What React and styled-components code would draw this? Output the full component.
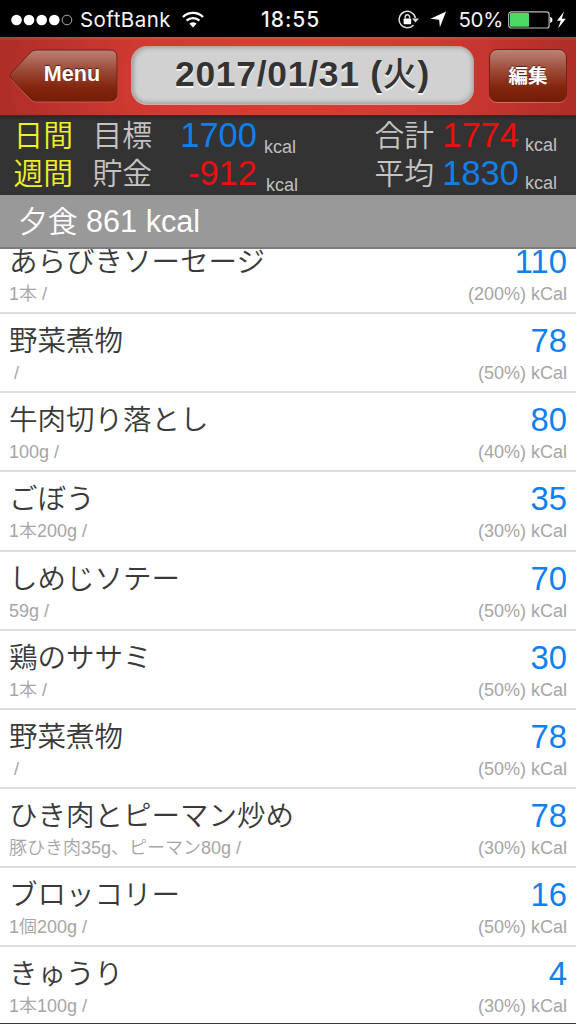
import React from "react";
import styled, { createGlobalStyle } from "styled-components";

const sans = `"Liberation Sans", "Noto Sans CJK JP", sans-serif`;
const cjk = `"Noto Sans CJK JP", sans-serif`;

const Global = createGlobalStyle`
  * { box-sizing: border-box; }
  body { margin: 0; background: #fff; }
`;

const Screen = styled.div`
  width: 576px;
  height: 1024px;
  overflow: hidden;
  display: flex;
  flex-direction: column;
  background: #fff;
  border-bottom: 1px solid #3a3838;
  font-family: ${sans};
  white-space: pre;
`;

const StatusBar = styled.header`
  flex: none;
  height: 37px;
  display: grid;
  grid-template-columns: 250px 1fr 168px;
  align-items: center;
  padding: 2px 10px 0 11px;
  background: #000;
  color: #f4f4f4;
  font-family: Inter, sans-serif;
  font-size: 20.5px;
`;

const StatusGroup = styled.div`
  display: flex;
  align-items: center;
  justify-content: ${(p) => (p.$end ? "flex-end" : "flex-start")};
`;

const Carrier = styled.span`
  margin: 0 11px 0 7px;
  letter-spacing: 0.45px;
`;

const Clock = styled.span`
  font-weight: 550;
  font-size: 21px;
  letter-spacing: 1px;
`;

const Percent = styled.span`
  margin: 0 5px 0 11px;
  letter-spacing: -0.3px;
`;

const NavBar = styled.nav`
  flex: none;
  height: 79px;
  display: flex;
  align-items: flex-start;
  padding: 9px 9px 0;
  background:
    linear-gradient(rgba(255, 110, 90, 0.25), transparent 4px),
    radial-gradient(ellipse 330px 260px at 50% 60%, #d93d33, #d13a31 45%, #a52a25);
  border-bottom: 1px solid #5c1f1c;
`;

const MenuButton = styled.button`
  position: relative;
  width: 109px;
  height: 56px;
  margin: 3px 0 0;
  padding: 0 0 7px 17px;
  border: 0;
  background: none;
  color: #fff;
  font: bold 21.6px/49px ${sans};
  text-shadow: 0 -1px 1px rgba(0, 0, 0, 0.6);
`;

const MenuShape = styled.svg`
  position: absolute;
  inset: 0;
`;

const MenuLabel = styled.span`
  position: relative;
`;

const DateBox = styled.div`
  width: 343px;
  height: 59px;
  margin-left: 13px;
  border-radius: 16px;
  background: #d1d1d1;
  border: 1px solid #b9a5a2;
  border-bottom-color: #d8aaa5;
  box-shadow: inset 2px 1px 4px rgba(90, 90, 90, 0.35), inset -1px -2px 4px rgba(90, 90, 90, 0.3);
  color: #333;
  font-size: 35.4px;
  font-weight: bold;
  letter-spacing: 0.75px;
  line-height: 55px;
  text-align: center;
  text-shadow: 0 1.5px 0 #f3f3f3;
`;

const DateDay = styled.span`
  display: inline-block;
  font-family: ${cjk};
  font-weight: 500;
  font-size: 34px;
  line-height: 30px;
`;

const EditButton = styled.button`
  width: 78px;
  height: 53px;
  margin: 3px 0 0 15px;
  padding: 0 0 2px;
  border: 1px solid #6b221a;
  border-radius: 8px;
  background: linear-gradient(#bd8175, #9c4a38 40%, #83270f 72%, #751d04);
  box-shadow: 0 1px 0 rgba(255, 150, 130, 0.5);
  color: #fff;
  font: bold 19.5px/48px ${cjk};
  text-shadow: 0 -1px 1px rgba(0, 0, 0, 0.5);
`;

const Summary = styled.section`
  flex: none;
  height: 79px;
  padding: 0 0 0 14px;
  background: linear-gradient(#292727, #333 4px);
`;

const SummaryRow = styled.div`
  height: 38px;
  display: grid;
  grid-template-columns: 79px 73px 91px 118px 60px 84px 1fr;
  align-items: baseline;
  line-height: 38px;
`;

const Label = styled.span`
  position: relative;
  top: -2px;
  left: -0.5px;
  color: ${(p) => p.$color || "#c4c4c4"};
  font-family: ${cjk};
  font-weight: 350;
  font-size: 29.8px;
`;

const Total = styled.span`
  position: relative;
  top: -1px;
  color: ${(p) => (p.$over ? "#ef0d0d" : "#0f80ee")};
  font-size: 34.5px;
  text-align: right;
`;

const Unit = styled.span`
  position: relative;
  top: ${(p) => p.$drop}px;
  padding-left: ${(p) => p.$indent}px;
  color: #c0c0c0;
  font-size: 18px;
`;

const MealHeader = styled.h2`
  flex: none;
  height: 54px;
  margin: 0;
  padding-left: 18px;
  background: #999;
  border-bottom: 2px solid #7d7d7d;
  color: #fff;
  font-size: 30.6px;
  font-weight: 350;
  line-height: 53px;
`;

const MealName = styled.span`
  display: inline-block;
  font-family: ${cjk};
  font-size: 29.8px;
  line-height: 30px;
`;

const FoodList = styled.ul`
  flex: 1;
  min-height: 0;
  overflow: hidden;
  display: flex;
  flex-direction: column;
  margin: 0;
  padding: 0;
  list-style: none;
`;

const FoodRow = styled.li`
  flex: none;
  height: 79.17px;
  padding: 8px 9px 0;
  border-bottom: 2px solid #dcdcdc;

  &:first-child {
    margin-top: -14px;
  }
`;

const Line = styled.div`
  display: flex;
  justify-content: space-between;
  height: ${(p) => p.$height}px;
  line-height: ${(p) => p.$height}px;
`;

const FoodName = styled.span`
  color: #3a3a3a;
  font-family: ${cjk};
  font-weight: 350;
  font-size: 28.5px;
  line-height: 33px;
`;

const Calories = styled.span`
  color: #0f80ee;
  font-size: 32.8px;
`;

const Detail = styled.span`
  color: #a6a6a6;
  font-weight: 350;
  font-size: 18px;
  line-height: 26px;
`;

const foods = [
  ["あらびきソーセージ", "110", "1本 /", "200"],
  ["野菜煮物", "78", " /", "50"],
  ["牛肉切り落とし", "80", "100g /", "40"],
  ["ごぼう", "35", "1本200g /", "30"],
  ["しめじソテー", "70", "59g /", "50"],
  ["鶏のササミ", "30", "1本 /", "50"],
  ["野菜煮物", "78", " /", "50"],
  ["ひき肉とピーマン炒め", "78", "豚ひき肉35g、ピーマン80g /", "30"],
  ["ブロッコリー", "16", "1個200g /", "50"],
  ["きゅうり", "4", "1本100g /", "30"],
];

const Signal = () => (
  <svg width="62" height="12" viewBox="0 0 62 12">
    {[5.5, 18, 30.7, 43.3].map((x) => (
      <circle key={x} cx={x} cy="6" r="5.3" fill="#fff" />
    ))}
    <circle cx="56" cy="6" r="4.8" fill="none" stroke="#aaa" strokeWidth="1" />
  </svg>
);

const Wifi = () => (
  <svg width="22" height="17" viewBox="0 0 22 17" fill="none" stroke="#fff" strokeWidth="2.4">
    <path d="M1 6a14.2 14.2 0 0 1 20 0" />
    <path d="M4.6 9.7a9.2 9.2 0 0 1 12.8 0" />
    <path d="M11 16.4 7.4 12.7a5.2 5.2 0 0 1 7.2 0z" fill="#fff" stroke="none" />
  </svg>
);

const RotationLock = () => (
  <svg width="21" height="19" viewBox="0 0 21 19" fill="none" stroke="#ddd">
    <path d="M17.4 8A8.2 8.2 0 1 0 15.5 15" strokeWidth="1.5" />
    <path d="M14 8.400h7l-3.500 4.200z" fill="#ddd" stroke="none" />
    <rect x="5.6" y="8.4" width="7.6" height="5.8" rx="0.8" fill="#fff" stroke="none" />
    <path d="M7.2 8.6V7a2.2 2.2 0 0 1 4.4 0v1.6" strokeWidth="1.4" />
  </svg>
);

const LocationArrow = () => (
  <svg width="17" height="17" viewBox="0 0 16 17">
    <path d="M15.6.6 9.4 16.2 8.6 8.7 0 7.8z" fill="#fff" />
  </svg>
);

const Battery = () => (
  <svg width="58" height="18" viewBox="0 0 58 18">
    <rect x=".7" y=".8" width="40.4" height="16.2" rx="2.6" fill="none" stroke="#bbb" strokeWidth="1.2" />
    <rect x="2" y="2" width="19" height="13.8" rx="1" fill="#4cd964" />
    <path d="M42.2 6c1.3.2 2.2 1.4 2.2 2.9S43.5 11.6 42.2 11.8z" fill="#fff" />
    <path d="M56 .6 49 9.8h3.800L50 17.4l7.800-9.600h-4z" fill="#fff" />
  </svg>
);

const Spacer = styled.span`
  width: 11px;
`;

export default function App() {
  return (
    <Screen>
      <Global />
      <StatusBar>
        <StatusGroup>
          <Signal />
          <Carrier>SoftBank</Carrier>
          <Wifi />
        </StatusGroup>
        <Clock>18:55</Clock>
        <StatusGroup $end>
          <RotationLock />
          <Spacer />
          <LocationArrow />
          <Percent>50%</Percent>
          <Battery />
        </StatusGroup>
      </StatusBar>

      <NavBar>
        <MenuButton>
          <MenuShape width="109" height="56" viewBox="0 0 109 56">
            <defs>
              <linearGradient id="menuFill" x1="0" y1="0" x2="0" y2="1">
                <stop offset="0" stopColor="#bd8175" />
                <stop offset="0.4" stopColor="#9c4a38" />
                <stop offset="0.72" stopColor="#83270f" />
                <stop offset="1" stopColor="#751d04" />
              </linearGradient>
            </defs>
            <path
              d="M27 2H101q7 0 7 7V46q0 7-7 7H27q-4 0-7-4L3 31q-3-3 0-6L20 6q3-4 7-4z"
              fill="none"
              stroke="#e07a6c"
              strokeOpacity="0.6"
            />
            <path
              d="M27 1H101q7 0 7 7V45q0 7-7 7H27q-4 0-7-4L2 29q-2-2.5 0-5L20 5q3-4 7-4z"
              fill="url(#menuFill)"
              stroke="#6b221a"
            />
          </MenuShape>
          <MenuLabel>Menu</MenuLabel>
        </MenuButton>
        <DateBox>
          2017/01/31 (<DateDay>火</DateDay>)
        </DateBox>
        <EditButton>編集</EditButton>
      </NavBar>

      <Summary>
        <SummaryRow>
          <Label $color="#f0f024">日間</Label>
          <Label>目標</Label>
          <Total>1700</Total>
          <Unit $indent={7} $drop={5}>kcal</Unit>
          <Label>合計</Label>
          <Total $over>1774</Total>
          <Unit $indent={6} $drop={3}>kcal</Unit>
        </SummaryRow>
        <SummaryRow>
          <Label $color="#f0f024">週間</Label>
          <Label>貯金</Label>
          <Total $over>-912</Total>
          <Unit $indent={9} $drop={5}>kcal</Unit>
          <Label>平均</Label>
          <Total>1830</Total>
          <Unit $indent={6} $drop={3}>kcal</Unit>
        </SummaryRow>
      </Summary>

      <MealHeader>
        <MealName>夕食</MealName> 861 kcal
      </MealHeader>

      <FoodList>
        {foods.map(([name, kcal, amount, percent], i) => (
          <FoodRow key={i}>
            <Line $height={38}>
              <FoodName>{name}</FoodName>
              <Calories>{kcal}</Calories>
            </Line>
            <Line $height={24}>
              <Detail>{amount}</Detail>
              <Detail>({percent}%) kCal</Detail>
            </Line>
          </FoodRow>
        ))}
      </FoodList>
    </Screen>
  );
}
